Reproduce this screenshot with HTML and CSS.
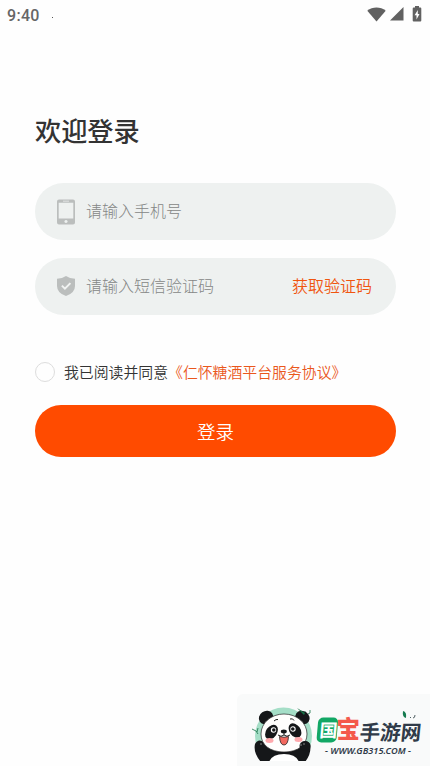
FILE: index.html
```html
<!DOCTYPE html>
<html lang="zh-CN">
<head>
    <meta charset="UTF-8">
    <meta name="viewport" content="width=device-width, initial-scale=1.0">
    <title>欢迎登录</title>
    <link rel="stylesheet" href="styles.css">
</head>
<body>
    <div class="status-bar">
        <span class="time">9:40</span>
        <span class="dot"></span>
        <div class="status-icons">
            <svg width="19" height="15" viewBox="0 0 20 15"><path d="M0.3 3.6C5.8-.9 14.2-.9 19.7 3.6L10 14.8z"/></svg>
            <svg width="14" height="14" viewBox="0 0 14 14"><path d="M13.5 0v13.6H0z"/></svg>
            <svg class="battery" width="10" height="16" viewBox="0 0 10 16">
                <path fill-rule="evenodd" d="M3 0h4v1.6h1.3q1 0 1 1v12q0 1-1 1H1.7q-1 0-1-1v-12q0-1 1-1H3zM5.8 4L2.6 9.3h1.9v4.2l3-5.5H5.8z"/>
            </svg>
        </div>
    </div>

    <div class="container">
        <h1>欢迎登录</h1>

        <div class="field">
            <svg class="field-icon" width="18" height="26" viewBox="0 0 18 26">
                <path fill-rule="evenodd" d="M2 .5h14q2 0 2 2v21q0 2-2 2H2q-2 0-2-2v-21q0-2 2-2zM1.7 3.7v15.8h14.6V3.7zM6 1.7v.8h6v-.8zM9 20.9a1.6 1.6 0 1 0 .01 0z"/>
            </svg>
            <input type="tel" placeholder="请输入手机号">
        </div>

        <div class="field">
            <svg class="field-icon shield" width="18" height="20" viewBox="0 0 18 20">
                <path d="M9 0q3.6 2.5 9 2.8V10q0 7-9 10Q0 17 0 10V2.8Q5.4 2.5 9 0z"/>
                <path class="check" d="M4.9 9.6l3 3 5.5-5.5"/>
            </svg>
            <input type="text" placeholder="请输入短信验证码">
            <button class="code-btn">获取验证码</button>
        </div>

        <div class="agreement">
            <span class="radio"></span>
            <span class="agreement-text">我已阅读并同意<a class="link">《仁怀糖酒平台服务协议》</a></span>
        </div>

        <button class="login-btn">登录</button>
    </div>

    <div class="watermark">
        <svg width="193" height="72" viewBox="0 0 193 72">
            <!-- panda -->
            <clipPath id="cut"><path d="M0 0h100v67H0z"/></clipPath>
            <g clip-path="url(#cut)">
                <circle cx="46.5" cy="42" r="28.5" fill="#a5dec7"/>
                <path d="M24 68q-8-9-6-18 3-6 9-2l6 7h28l3-6q6-4 9 1 2 9-5 18z" fill="#151719"/>
                <path d="M32 68q3-8 15-8t15 8z" fill="#fff"/>
                <ellipse cx="29" cy="23.5" rx="7.5" ry="6.5" fill="#151719" transform="rotate(-35 29 23.5)"/>
                <ellipse cx="65.5" cy="23.5" rx="7.5" ry="6.5" fill="#151719" transform="rotate(35 65.5 23.5)"/>
                <path d="M47 20c13 0 23 9 23 20 0 11-9 18-23 18s-23-7-23-18c0-11 10-20 23-20z" fill="#fffefd" stroke="#222" stroke-width=".7"/>
                <ellipse cx="34.5" cy="38" rx="5.5" ry="8" fill="#151719" transform="rotate(35 34.5 38)"/>
                <ellipse cx="58" cy="36.5" rx="5.5" ry="8" fill="#151719" transform="rotate(-35 58 36.5)"/>
                <g fill="#fff">
                    <circle cx="36.5" cy="36" r="2.7"/>
                    <circle cx="56" cy="35" r="2.7"/>
                </g>
                <g fill="#151719">
                    <circle cx="36.8" cy="36" r="1.8"/>
                    <circle cx="55.8" cy="35" r="1.8"/>
                    <ellipse cx="46.8" cy="37.5" rx="3" ry="1.9"/>
                    <ellipse cx="68" cy="52" rx="5.5" ry="5"/>
                </g>
                <path d="M37 27q2-2 4-1.5M53 25q3-1 4 1.5M47 39v2q-3 2.5-6 0M47 41q3 2.5 6 0" fill="none" stroke="#222"/>
                <path d="M42.5 42.5q4.5 1.5 9 0-.5 8.5-4.5 8.5t-4.5-8.5z" fill="#f2685f" stroke="#222" stroke-width=".8"/>
                <ellipse cx="32.5" cy="46.5" rx="4" ry="2.5" fill="#ffa9ad"/>
                <ellipse cx="61.5" cy="45.5" rx="4" ry="2.5" fill="#ffa9ad"/>
                <path d="M64 50v2M67 49v2M24 49v2" fill="none" stroke="#ccc" stroke-width=".6"/>
            </g>
            <path d="M60 14l7 7 1-2z" fill="#167247"/>
            <path d="M15 35l4 2 2 3M21 34l-1 4M71 20q3 0 2-4M68 17v1" fill="none" stroke="#167247" stroke-width=".8"/>
            <!-- name -->
            <g class="brand">
                <rect x="82" y="23.5" width="20" height="25" rx="5" fill="#12a765" transform="skewX(-5) translate(1.5 0)"/>
                <text class="guo" transform="translate(82 43) skewX(-5)">国</text>
                <text class="bao" x="99.5" y="44">宝</text>
                <text class="name" transform="translate(122 45.5) skewX(-6)">手游网</text>
            </g>
            <path d="M166 17q4 1 3 7-4-1-3-7z" fill="#167b50"/>
            <path d="M173 23l1 1M176 24q2 0 2-3" fill="none" stroke="#526064"/>
            <text class="site" x="88" y="60" textLength="86" lengthAdjust="spacingAndGlyphs">- WWW.GB315.COM -</text>
        </svg>
    </div>
</body>
</html>
```
FILE: styles.css
```css
* {
    box-sizing: border-box;
}

body {
    margin: 0;
    height: 100vh;
    overflow: hidden;
    background: #fefefe;
    color: #333;
    font-family: "Noto Sans CJK SC", sans-serif;
}

.status-bar {
    display: flex;
    align-items: center;
    height: 30px;
    padding: 0 8px 2px 7px;
}

.time {
    color: #666;
    font: 500 16px/20px Roboto, sans-serif;
    letter-spacing: 0.3px;
    padding-top: 3px;
}

.dot {
    width: 1px;
    height: 1px;
    margin: 6px 0 0 12px;
    background: #555;
}

.status-icons {
    display: flex;
    align-items: center;
    gap: 4px;
    margin-left: auto;
    fill: #616161;
}

.battery {
    margin-left: 4px;
}

.container {
    padding: 80px 34px 0 35px;
}

h1 {
    margin: 0 0 33px;
    font-size: 26.2px;
    font-weight: 500;
    line-height: 40px;
}

.field {
    display: flex;
    align-items: center;
    height: 57px;
    margin-bottom: 18px;
    padding: 0 24px 0 22px;
    border-radius: 29px;
    background: #eef1f0;
}

.field-icon {
    flex: none;
    margin-right: 11px;
    fill: #bbbebd;
}

.shield {
    margin-bottom: 2px;
}

.check {
    fill: none;
    stroke: #f1f3f2;
    stroke-width: 2;
}

input {
    flex: 1;
    min-width: 0;
    padding: 0 0 3px;
    border: none;
    background: none;
    font: 300 16px/24px "Noto Sans CJK SC", sans-serif;
}

input::placeholder {
    color: #858786;
    opacity: 1;
}

button {
    padding: 0;
    border: none;
    font-family: inherit;
    font-weight: 350;
    cursor: pointer;
}

.code-btn {
    padding-bottom: 3px;
    background: none;
    color: #f0550f;
    font-size: 16px;
}

.agreement {
    display: flex;
    align-items: center;
    height: 24px;
    margin-top: 45px;
    font-size: 14.86px;
    font-weight: 350;
    white-space: nowrap;
}

.agreement-text {
    padding-bottom: 1px;
}

.radio {
    width: 20px;
    height: 20px;
    margin-right: 9px;
    border: 1px solid #ddd;
    border-radius: 50%;
}

.link {
    color: #ea571c;
}

.login-btn {
    width: 100%;
    height: 52px;
    margin-top: 21px;
    border-radius: 26px;
    background: #ff4b00;
    color: #fff;
    font-size: 18.5px;
}

.watermark {
    position: absolute;
    right: 0;
    bottom: 0;
    width: 193px;
    height: 72px;
    border-radius: 6px 0 0 0;
    background: #f9fafa;
}

.brand {
    font-family: "Noto Sans CJK SC", sans-serif;
    font-weight: 900;
}

.guo {
    fill: #fff;
    font-size: 18px;
    font-weight: 700;
}

.bao {
    fill: #f4594b;
    font-size: 23.5px;
}

.name {
    fill: #303b49;
    font-size: 20.5px;
    font-weight: 700;
}

.site {
    fill: #303b49;
    font: italic 600 9.5px "Noto Sans", sans-serif;
}
```
